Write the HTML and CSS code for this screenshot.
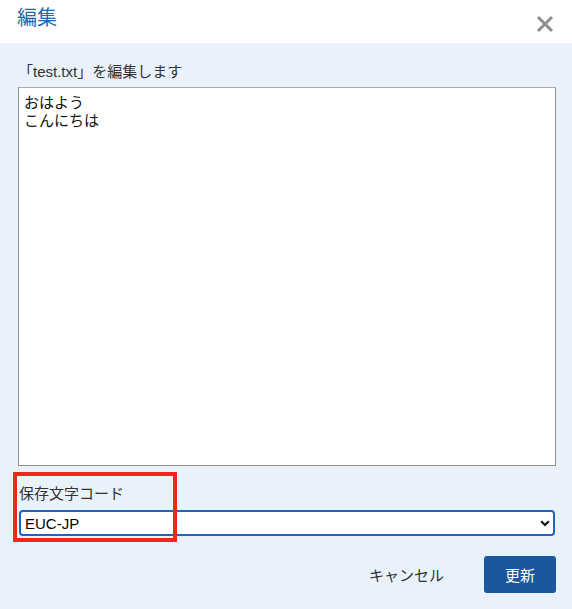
FILE: index.html
```html
<!DOCTYPE html>
<html lang="ja">
<head>
<meta charset="utf-8">
<title>編集</title>
<link rel="stylesheet" href="styles.css">
</head>
<body>
<div class="dialog">
  <header class="head">
    <h1 class="title">編集</h1>
    <button class="close" aria-label="閉じる">
      <svg width="18" height="18" viewBox="0 0 18 18"><path d="M2 2 L16 16 M16 2 L2 16" stroke="#8e8e8e" stroke-width="3" stroke-linecap="butt"/></svg>
    </button>
  </header>
  <main class="body">
    <label class="label">「test.txt」を編集します</label>
    <div class="textarea">おはよう<br>こんにちは</div>
    <div class="enc">
      <div class="enc-label">保存文字コード</div>
      <div class="select">
        <span>EUC-JP</span>
        <svg width="10" height="7" viewBox="0 0 10 7"><path d="M1.2 1.2 L5 5 L8.8 1.2" fill="none" stroke="#111" stroke-width="2.2"/></svg>
      </div>
      <div class="highlight"></div>
    </div>
    <div class="actions">
      <button class="btn-cancel">キャンセル</button>
      <button class="btn-primary">更新</button>
    </div>
  </main>
</div>
</body>
</html>
```
FILE: styles.css
```css
* { box-sizing: border-box; }
html, body { margin: 0; padding: 0; }
body {
  width: 572px;
  height: 609px;
  font-family: "Liberation Sans", "Noto Sans CJK JP", sans-serif;
  background: #e9f1fb;
  color: #222;
  overflow: hidden;
}
.dialog { display: flex; flex-direction: column; height: 609px; }
.head {
  height: 43px;
  background: #fff;
  display: flex;
  align-items: center;
  justify-content: space-between;
  padding: 0 18px 0 17px;
}
.title {
  margin: 0;
  font-size: 20px;
  font-weight: normal;
  color: #2766ad;
  line-height: 1;
  position: relative;
  top: -4px;
}
.close {
  border: 0;
  background: none;
  padding: 0;
  width: 18px;
  height: 18px;
  display: flex;
  position: relative;
  top: 2px;
}
.body {
  flex: 1;
  display: flex;
  flex-direction: column;
  padding: 19px 16px 0 18px;
}
.label {
  font-size: 15px;
  line-height: 20px;
  color: #333;
  margin-bottom: 5px;
}
.textarea {
  height: 379px;
  background: #fff;
  border: 1px solid #8f8f8f;
  border-top-color: #a9a9a9;
  padding: 6px 5px;
  font-size: 15px;
  line-height: 18px;
  color: #111;
}
.enc {
  position: relative;
  margin-top: 18px;
  padding-left: 1px;
  padding-right: 1px;
}
.enc-label {
  font-size: 15px;
  line-height: 20px;
  color: #333;
}
.select {
  margin-top: 6px;
  height: 26px;
  background: #fff;
  border: 2px solid #1f63c4;
  border-radius: 4px;
  display: flex;
  align-items: center;
  justify-content: space-between;
  padding: 0 3px 0 4px;
  font-size: 15px;
  color: #000;
}
.highlight {
  position: absolute;
  left: -5px;
  top: -12px;
  width: 164px;
  height: 70px;
  border: 4px solid #f3261a;
  pointer-events: none;
}
.actions {
  display: flex;
  justify-content: flex-end;
  align-items: center;
  gap: 40px;
  margin-top: 20px;
}
.btn-cancel {
  border: 0;
  background: none;
  padding: 0;
  font-family: inherit;
  font-size: 15px;
  color: #333;
}
.btn-primary {
  width: 72px;
  height: 37px;
  border: 0;
  border-radius: 3px;
  background: #1b579d;
  color: #fff;
  font-family: inherit;
  font-size: 15px;
}
```
